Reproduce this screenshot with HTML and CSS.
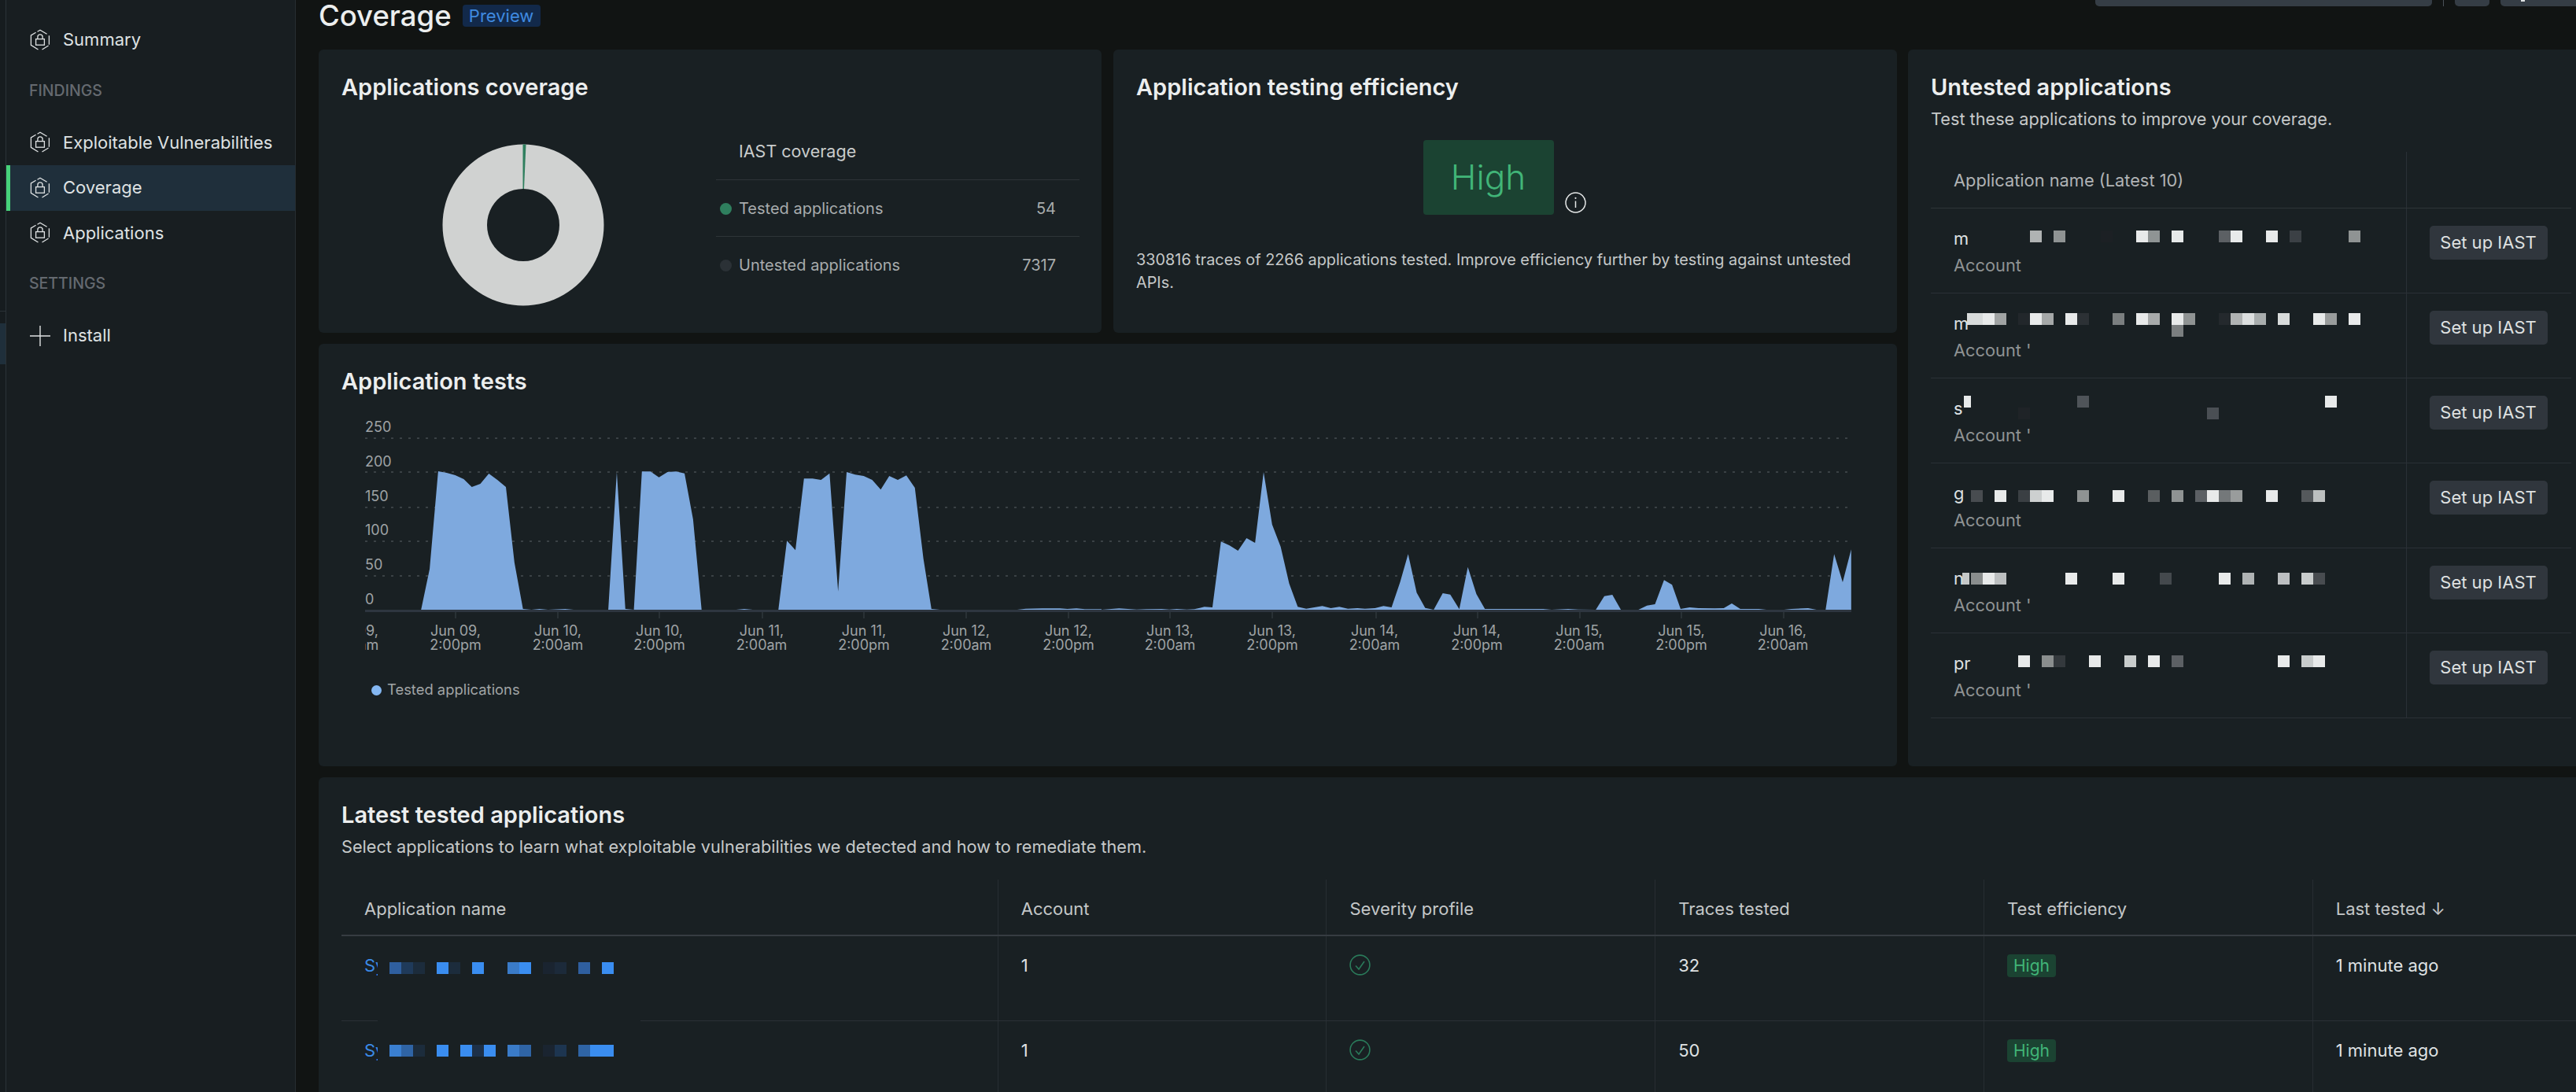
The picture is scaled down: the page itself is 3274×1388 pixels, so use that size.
FILE: index.html
```html
<!DOCTYPE html>
<html lang="en">
<head>
<meta charset="utf-8">
<title>Coverage</title>
<link rel="stylesheet" href="styles.css">
</head>
<body>
<svg class="defs" width="0" height="0" aria-hidden="true">
  <symbol id="hexlock" viewBox="0 0 28 28">
    <path d="M10.5 3.2 14 1.2l8.6 5M25.4 8.2v11.6M24.6 21 16.5 26M11.5 26 2.4 20.3V7.9L8.6 4.2" fill="none" stroke="currentColor" stroke-width="1.3"/>
    <rect x="8.6" y="12.6" width="10.8" height="7.6" fill="none" stroke="currentColor" stroke-width="1.3"/>
    <path d="M10.9 12.6V10a3.1 3.1 0 0 1 6.2 0v2.6" fill="none" stroke="currentColor" stroke-width="1.3"/>
  </symbol>
  <symbol id="okcheck" viewBox="0 0 27 27">
    <circle cx="13.5" cy="13.5" r="12.4" fill="none" stroke="currentColor" stroke-width="1.6"/>
    <path d="M8 14.5l4 4.5 7-10" fill="none" stroke="currentColor" stroke-width="1.6"/>
  </symbol>
</svg>

<div class="rail"><div class="rail-line"></div><div class="rail-active"></div></div>

<nav class="sidebar">
  <a class="nav-item"><svg class="nav-icon"><use href="#hexlock"/></svg>Summary</a>
  <div class="nav-heading">FINDINGS</div>
  <a class="nav-item"><svg class="nav-icon"><use href="#hexlock"/></svg>Exploitable Vulnerabilities</a>
  <a class="nav-item is-active"><svg class="nav-icon"><use href="#hexlock"/></svg>Coverage</a>
  <a class="nav-item"><svg class="nav-icon"><use href="#hexlock"/></svg>Applications</a>
  <div class="nav-heading">SETTINGS</div>
  <a class="nav-item"><svg class="nav-icon" viewBox="0 0 28 28"><path d="M14 1v26M1 14h26" fill="none" stroke="currentColor" stroke-width="1.4"/></svg>Install</a>
</nav>

<main class="main">
  <header class="page-head">
    <h1 class="page-title">Coverage</h1>
    <span class="preview">Preview</span>
    <div class="toolbar">
      <span class="tool tool-search"></span>
      <span class="tool-sep"></span>
      <span class="tool tool-small"></span>
      <span class="tool tool-last"><i class="tool-glyph"></i></span>
    </div>
  </header>

  <div class="grid">
    <section class="card card-coverage">
      <h2 class="card-title">Applications coverage</h2>
      <div class="coverage-body">
        <div class="donut-wrap">
          <svg class="donut" viewBox="0 0 206 206">
            <path d="M103 .5A102.500 102.500 0 1 1 102.990 .5ZM103 57A46 46 0 1 0 103.010 57Z" fill="#d0d2d1" fill-rule="evenodd"/>
            <path d="M102.500 .5L106.500 .6 104 57 102.500 57Z" fill="#2f7f5e"/>
          </svg>
        </div>
        <table class="cov-table">
          <tr><th colspan="2">IAST coverage</th></tr>
          <tr><td><span class="dot dot-green"></span>Tested applications</td><td class="num">54</td></tr>
          <tr><td><span class="dot dot-grey"></span>Untested applications</td><td class="num">7317</td></tr>
        </table>
      </div>
    </section>

    <section class="card card-eff">
      <h2 class="card-title">Application testing efficiency</h2>
      <div class="eff-row">
        <div class="eff-badge">High</div>
        <svg class="info" viewBox="0 0 27 27">
          <circle cx="13.500" cy="13.500" r="12.500" fill="none" stroke="currentColor" stroke-width="1.500"/>
          <path d="M13.500 11.500v8.500" stroke="currentColor" stroke-width="1.500"/>
          <circle cx="13.500" cy="7.800" r="1.100" fill="currentColor"/>
        </svg>
      </div>
      <p class="eff-text">330816 traces of 2266 applications tested. Improve efficiency further by testing against untested APIs.</p>
    </section>

    <section class="card card-untested">
      <h2 class="card-title">Untested applications</h2>
      <p class="card-sub">Test these applications to improve your coverage.</p>
      <table class="u-table">
        <colgroup><col class="u-col-name"><col class="u-col-action"></colgroup>
        <tr><th>Application name (Latest 10)</th><th></th></tr>
        <tr><td><div class="u-name">m</div><div class="u-acc">Account</div></td><td><button class="btn">Set up IAST</button></td></tr>
        <tr><td><div class="u-name">m</div><div class="u-acc">Account '</div></td><td><button class="btn">Set up IAST</button></td></tr>
        <tr><td><div class="u-name">s</div><div class="u-acc">Account '</div></td><td><button class="btn">Set up IAST</button></td></tr>
        <tr><td><div class="u-name">g</div><div class="u-acc">Account</div></td><td><button class="btn">Set up IAST</button></td></tr>
        <tr><td><div class="u-name">n</div><div class="u-acc">Account '</div></td><td><button class="btn">Set up IAST</button></td></tr>
        <tr><td><div class="u-name">pr</div><div class="u-acc">Account '</div></td><td><button class="btn">Set up IAST</button></td></tr>
      </table>
      <svg class="mask mask-untested" viewBox="2425 63 860 900" aria-hidden="true">
        <rect class="wipe" x="2578" y="910" width="50" height="2"/>
        <g transform="translate(2580 293)">
          <rect x="0" fill="#b0b3b3"/><rect x="30" fill="#8f9393"/><rect x="90" fill="#1c2024"/><rect x="135" fill="#e8eaea"/><rect x="150" fill="#8f9494"/><rect x="180" fill="#e6e9e9"/><rect x="240" fill="#5c6064"/><rect x="255" fill="#e8eaea"/><rect x="300" fill="#e8eaea"/><rect x="330" fill="#3b4045"/><rect x="405" fill="#8f9393"/>
        </g>
        <g transform="translate(2580 398)">
          <rect x="-80" fill="#d8dbdb"/><rect x="-75" fill="#d8dbdb"/><rect x="-60" fill="#e8eaea"/><rect x="-45" fill="#a0a3a3"/><rect x="-15" fill="#22272b"/><rect x="0" fill="#e8eaea"/><rect x="15" fill="#a5a8a8"/><rect x="45" fill="#e8eaea"/><rect x="60" fill="#2c3135"/><rect x="105" fill="#7b7f80"/><rect x="135" fill="#e8eaea"/><rect x="150" fill="#a8abab"/><rect x="180" fill="#e8eaea"/><rect x="195" fill="#8f9393"/><rect x="180" y="15" fill="#7b7f80"/><rect x="240" fill="#24292d"/><rect x="255" fill="#b0b3b3"/><rect x="270" fill="#dcdfdf"/><rect x="285" fill="#a8adad"/><rect x="315" fill="#d8dbdb"/><rect x="360" fill="#e8eaea"/><rect x="375" fill="#999c9c"/><rect x="405" fill="#e8eaea"/>
        </g>
        <g transform="translate(2580 503)">
          <rect class="narrow" x="-84" fill="#e8eaea"/><rect x="60" fill="#4f5459"/><rect x="375" fill="#e8eaea"/><rect x="-15" y="15" fill="#1f2327"/><rect x="225" y="15" fill="#4a4f54"/>
        </g>
        <g transform="translate(2580 623)">
          <rect x="-75" fill="#484c50"/><rect x="-45" fill="#e8eaea"/><rect x="-15" fill="#3a3f43"/><rect x="0" fill="#cdd0d0"/><rect x="15" fill="#e8eaea"/><rect x="60" fill="#8f9393"/><rect x="105" fill="#e8eaea"/><rect x="150" fill="#5a5e60"/><rect x="180" fill="#8f9393"/><rect x="210" fill="#5c6064"/><rect x="225" fill="#e8eaea"/><rect x="240" fill="#74787a"/><rect x="255" fill="#999c9c"/><rect x="300" fill="#e8eaea"/><rect x="345" fill="#55595c"/><rect x="360" fill="#bcbfbf"/>
        </g>
        <g transform="translate(2580 728)">
          <rect class="narrow" x="-86" fill="#c5c8c8"/><rect x="-75" fill="#8a8e8e"/><rect x="-60" fill="#e8eaea"/><rect x="-45" fill="#bcbfc0"/><rect x="45" fill="#e8eaea"/><rect x="105" fill="#e8eaea"/><rect x="165" fill="#44494d"/><rect x="240" fill="#e8eaea"/><rect x="270" fill="#afb3b4"/><rect x="315" fill="#bcbfc1"/><rect x="345" fill="#c8cccc"/><rect x="360" fill="#484c50"/>
        </g>
        <g transform="translate(2580 833)">
          <rect x="-15" fill="#e8eaea"/><rect x="15" fill="#8a8e8e"/><rect x="30" fill="#34393d"/><rect x="75" fill="#e8eaea"/><rect x="120" fill="#c8cccc"/><rect x="150" fill="#e8eaea"/><rect x="180" fill="#5c6064"/><rect x="315" fill="#e8eaea"/><rect x="345" fill="#c8cccc"/><rect x="360" fill="#e8eaea"/>
        </g>
      </svg>
    </section>

    <section class="card card-chart">
      <h2 class="card-title">Application tests</h2>
      <svg class="chart" viewBox="434 510 1940 350" role="img" aria-label="Tested applications over time">
        <defs><clipPath id="plot-clip"><rect x="464" y="770" width="1900" height="80"/></clipPath></defs>
        <g class="grid-lines">
          <line x1="464" x2="2353" y1="557" y2="557"/>
          <line x1="464" x2="2353" y1="600" y2="600"/>
          <line x1="464" x2="2353" y1="645" y2="645"/>
          <line x1="464" x2="2353" y1="688" y2="688"/>
          <line x1="464" x2="2353" y1="732" y2="732"/>
        </g>
        <g class="y-labels">
          <text x="464" y="549">250</text>
          <text x="464" y="593">200</text>
          <text x="464" y="637">150</text>
          <text x="464" y="680">100</text>
          <text x="464" y="724">50</text>
          <text x="464" y="768">0</text>
        </g>
        <polygon class="area" transform="translate(400 430) scale(.63776 .33333)" points="212,1035 229,880 246,507 263,513 280,522 297,537 313,567 330,555 347,516 364,540 381,567 398,855 415,1032 432,1035 448,1032 465,1035 499,1032 516,1035 585,1035 602,510 619,1032 636,1035 652,508 669,508 686,530 703,510 720,508 737,515 754,690 771,1035 840,1035 856,1032 873,1035 924,1035 941,772 958,808 975,535 992,535 1009,540 1026,515 1043,965 1060,510 1077,520 1094,525 1111,540 1128,577 1145,525 1162,540 1179,523 1196,570 1213,840 1229,1032 1246,1035 1400,1035 1417,1031 1450,1030 1485,1030 1500,1032 1518,1030 1535,1033 1568,1033 1568,1035"/>
        <polygon class="area" transform="translate(1400 430) scale(.63776 .33333)" points="0,1035 35,1030 70,1034 90,1033 120,1032 135,1034 150,1032 170,1034 185,1033 205,1024 221,1026 238,775 255,790 272,810 289,762 306,780 323,510 340,710 357,795 374,935 391,1024 408,1031 440,1021 457,1029 474,1024 491,1031 510,1029 525,1031 545,1029 562,1021 578,1026 595,930 611,823 628,970 645,1028 662,1035 680,972 695,977 713,1033 730,872 747,975 764,1032 880,1032 897,1035 930,1032 950,1034 985,1035 1002,983 1018,978 1035,1035 1070,1035 1087,1019 1103,1014 1121,922 1137,940 1154,1032 1172,1026 1190,1029 1222,1030 1240,1029 1256,1011 1273,1032 1310,1032 1325,1035 1360,1035 1375,1032 1408,1029 1425,1035 1443,1035 1460,823 1477,930 1494,805 1494,1035"/>
        <line class="baseline" x1="464" x2="2353" y1="776.500" y2="776.500"/>
        <g class="ticks">
          <line x1="579" x2="579" y1="778" y2="786"/><line x1="709" x2="709" y1="778" y2="786"/><line x1="838" x2="838" y1="778" y2="786"/><line x1="969" x2="969" y1="778" y2="786"/><line x1="1098" x2="1098" y1="778" y2="786"/><line x1="1228" x2="1228" y1="778" y2="786"/><line x1="1358" x2="1358" y1="778" y2="786"/><line x1="1487" x2="1487" y1="778" y2="786"/><line x1="1617" x2="1617" y1="778" y2="786"/><line x1="1749" x2="1749" y1="778" y2="786"/><line x1="1878" x2="1878" y1="778" y2="786"/><line x1="2008" x2="2008" y1="778" y2="786"/><line x1="2137" x2="2137" y1="778" y2="786"/><line x1="2267" x2="2267" y1="778" y2="786"/>
        </g>
        <g class="x-labels" clip-path="url(#plot-clip)">
          <text x="449" y="808">Jun 09,<tspan x="449" dy="18">2:00am</tspan></text>
          <text x="579" y="808">Jun 09,<tspan x="579" dy="18">2:00pm</tspan></text>
          <text x="709" y="808">Jun 10,<tspan x="709" dy="18">2:00am</tspan></text>
          <text x="838" y="808">Jun 10,<tspan x="838" dy="18">2:00pm</tspan></text>
          <text x="968" y="808">Jun 11,<tspan x="968" dy="18">2:00am</tspan></text>
          <text x="1098" y="808">Jun 11,<tspan x="1098" dy="18">2:00pm</tspan></text>
          <text x="1228" y="808">Jun 12,<tspan x="1228" dy="18">2:00am</tspan></text>
          <text x="1358" y="808">Jun 12,<tspan x="1358" dy="18">2:00pm</tspan></text>
          <text x="1487" y="808">Jun 13,<tspan x="1487" dy="18">2:00am</tspan></text>
          <text x="1617" y="808">Jun 13,<tspan x="1617" dy="18">2:00pm</tspan></text>
          <text x="1747" y="808">Jun 14,<tspan x="1747" dy="18">2:00am</tspan></text>
          <text x="1877" y="808">Jun 14,<tspan x="1877" dy="18">2:00pm</tspan></text>
          <text x="2007" y="808">Jun 15,<tspan x="2007" dy="18">2:00am</tspan></text>
          <text x="2137" y="808">Jun 15,<tspan x="2137" dy="18">2:00pm</tspan></text>
          <text x="2266" y="808">Jun 16,<tspan x="2266" dy="18">2:00am</tspan></text>
        </g>
      </svg>
      <div class="legend"><span class="dot dot-blue"></span>Tested applications</div>
    </section>

    <section class="card card-latest">
      <h2 class="card-title">Latest tested applications</h2>
      <p class="card-sub">Select applications to learn what exploitable vulnerabilities we detected and how to remediate them.</p>
      <table class="l-table">
        <colgroup><col class="l-col-name"><col class="l-col"><col class="l-col"><col class="l-col"><col class="l-col"><col class="l-col"></colgroup>
        <tr><th>Application name</th><th>Account</th><th>Severity profile</th><th>Traces tested</th><th>Test efficiency</th><th>Last tested ↓</th></tr>
        <tr><td><span class="app-link">Sy</span></td><td>1</td><td><svg class="ok"><use href="#okcheck"/></svg></td><td>32</td><td><span class="tag">High</span></td><td>1 minute ago</td></tr>
        <tr><td><span class="app-link">Sy</span></td><td>1</td><td><svg class="ok"><use href="#okcheck"/></svg></td><td>50</td><td><span class="tag">High</span></td><td>1 minute ago</td></tr>
      </table>
      <svg class="mask mask-latest" viewBox="405 988 500 400" aria-hidden="true">
        <rect class="wipe" x="480" y="1296" width="334" height="3"/>
        <g transform="translate(495 1223)">
          <rect x="0" fill="#2f5f9f"/><rect x="15" fill="#1f3a5a"/><rect x="30" fill="#1c2c3c"/><rect x="60" fill="#3a8df0"/><rect x="75" fill="#1c2c3c"/><rect x="105" fill="#3a8df0"/><rect x="150" fill="#3a7bc8"/><rect x="165" fill="#3a8df0"/><rect x="195" fill="#1a2430"/><rect x="210" fill="#1c2a3a"/><rect x="240" fill="#2f5f9f"/><rect x="270" fill="#3a8df0"/>
        </g>
        <g transform="translate(495 1328)">
          <rect x="0" fill="#3a7fd0"/><rect x="15" fill="#2f64a5"/><rect x="30" fill="#1c2c3c"/><rect x="60" fill="#3a8df0"/><rect x="90" fill="#3a8df0"/><rect x="105" fill="#1d3048"/><rect x="120" fill="#3a8df0"/><rect x="150" fill="#3a7bc8"/><rect x="165" fill="#2f64a5"/><rect x="195" fill="#1a2430"/><rect x="210" fill="#1d3550"/><rect x="240" fill="#2f64a5"/><rect x="255" fill="#3a8df0"/><rect x="270" fill="#3a8df0"/>
        </g>
      </svg>
    </section>
  </div>
</main>
</body>
</html>
```

FILE: styles.css
```css
* { box-sizing: border-box; }

html, body {
  margin: 0;
  height: 1388px;
  overflow: hidden;
}

body {
  display: flex;
  background: #111413;
  color: #e6e8e8;
  font-family: Inter, "Noto Sans", sans-serif;
  font-size: 22px;
  line-height: 29px;
}

.defs { position: absolute; }

/* Left rail */
.rail {
  flex: 0 0 8px;
  padding-top: 395px;
  background: #161c1f;
  border-right: 1px solid #2a3237;
}
.rail-line {
  height: 16px;
  border-top: 1px solid #2a3237;
}
.rail-active {
  height: 52px;
  background: #1f2f3b;
}

/* Sidebar */
.sidebar {
  flex: 0 0 368px;
  padding-top: 22px;
  background: #181e21;
  border-right: 1px solid #262c30;
}
.nav-item {
  display: flex;
  align-items: center;
  gap: 15px;
  height: 57.5px;
  padding-left: 29px;
  color: #dfe2e3;
}
.nav-icon {
  flex: none;
  width: 28px;
  height: 28px;
  color: #dfe2e3;
}
.nav-item.is-active {
  padding-left: 24px;
  background: #1f2f3b;
  border-left: 5px solid #46d27a;
}
.nav-heading {
  height: 73px;
  padding: 21px 0 0 29px;
  color: #656a70;
  font-size: 19.500px;
  font-weight: 500;
}

/* Main */
.main {
  flex: 1;
  min-width: 0;
  padding-left: 29px;
}
.page-head {
  display: flex;
  align-items: flex-start;
  height: 63px;
}
.page-title {
  margin: 0;
  font-size: 36.500px;
  font-weight: 500;
  line-height: 40px;
  color: #eceeee;
}
.preview {
  margin: 6px 0 0 14px;
  width: 99px;
  height: 28px;
  text-align: center;
  line-height: 28px;
  font-size: 22px;
  color: #3f8ae0;
  background: #12294a;
  border-radius: 4px;
}
.toolbar {
  display: flex;
  align-items: flex-start;
  margin-left: auto;
}
.tool {
  display: block;
  height: 8px;
  background: #353d45;
  border-radius: 0 0 5px 5px;
}
.tool-search { width: 428px; }
.tool-sep {
  width: 1px;
  height: 8px;
  margin: 0 14px;
  background: #4a5158;
}
.tool-small { width: 44px; margin-right: 14px; }
.tool-last {
  width: 96px;
  padding-left: 26px;
  border-radius: 0 0 0 5px;
}
.tool-glyph {
  display: block;
  width: 5px;
  height: 2px;
  background: #dfe2e3;
}

.grid {
  display: grid;
  grid-template-columns: 995px 996px 870px;
  grid-template-rows: 360px 537px auto;
  column-gap: 15px;
  row-gap: 14px;
}

.card {
  position: relative;
  padding: 29px;
  background: #192023;
  border-radius: 6px;
}
.card-title {
  margin: 0;
  font-size: 29px;
  font-weight: 600;
  line-height: 37px;
  color: #eceeee;
}
.card-sub {
  margin: 8px 0 0;
  color: #c6c9c9;
  font-size: 21.700px;
}

/* Coverage */
.coverage-body {
  display: flex;
  align-items: flex-start;
}
.donut-wrap {
  flex: 0 0 462px;
  display: flex;
  justify-content: center;
  padding-top: 54px;
}
.donut {
  display: block;
  width: 206px;
  height: 206px;
  margin-left: -1px;
}
.cov-table {
  flex: 0 0 462px;
  margin: 27px 0 0 14px;
  border-collapse: collapse;
  font-size: 20px;
  color: #a8acad;
}
.cov-table th {
  height: 72px;
  padding: 2px 0 0 29px;
  text-align: left;
  font-weight: 400;
  font-size: 21.500px;
  color: #c9cccc;
}
.cov-table td {
  height: 72px;
  padding: 2px 0 0 5px;
  border-top: 1px solid #2e3438;
}
.cov-table .num {
  width: 100px;
  padding: 2px 30px 0 0;
  text-align: right;
}
.dot {
  display: inline-block;
  width: 15px;
  height: 15px;
  margin-right: 9px;
  border-radius: 50%;
  vertical-align: -1px;
}
.dot-green { background: #2f7f5e; }
.dot-grey { background: #2b3136; }
.dot-blue {
  width: 13px;
  height: 13px;
  margin-right: 7px;
  background: #84b7f2;
}

/* Efficiency */
.eff-row {
  display: flex;
  justify-content: center;
  align-items: flex-end;
  gap: 14px;
  margin: 49px 2px 0 0;
}
.eff-badge {
  width: 166px;
  height: 95px;
  text-align: center;
  line-height: 95px;
  font-size: 44px;
  font-weight: 300;
  color: #41b578;
  background: #1b4332;
  border-radius: 4px;
}
.info {
  width: 27px;
  height: 27px;
  margin-bottom: 2px;
  color: #e6e8e8;
}
.eff-text {
  margin: 43px 0 0;
  color: #c6c9c9;
  font-size: 19.850px;
}

/* Untested */
.card-untested {
  grid-column: 3;
  grid-row: 1 / span 2;
  margin-left: -1px;
}
.u-table {
  width: 814px;
  margin-top: 27px;
  border-collapse: collapse;
  table-layout: fixed;
}
.u-col-name { width: 604px; }
.u-table th {
  height: 71px;
  padding: 2px 0 0 29px;
  text-align: left;
  font-weight: 400;
  font-size: 21.800px;
  color: #b0b3b5;
  border-bottom: 1px solid #2e3438;
}
.u-table th + th,
.u-table td + td {
  border-left: 1px solid #2a3036;
}
.u-table td {
  height: 108px;
  padding: 24px 0 0 29px;
  vertical-align: top;
  border-bottom: 1px solid #2a3036;
}
.u-table td + td { padding-top: 22px; }
.u-name { color: #dfe2e3; font-size: 21.800px; }
.u-acc { margin-top: 5px; color: #8f9394; font-size: 21.800px; }
.btn {
  display: block;
  width: 150px;
  height: 43px;
  padding: 0;
  font: inherit;
  color: #dfe1e1;
  background: #30363d;
  border: 0;
  border-radius: 5px;
}

.mask {
  position: absolute;
  left: 0;
  top: 0;
  pointer-events: none;
}
.mask-untested { width: 860px; height: 900px; }
.mask-latest { width: 500px; height: 400px; }
.mask g rect { width: 15px; height: 15px; }
.mask g rect.narrow { width: 9px; }
.wipe { fill: #192023; }

/* Chart */
.card-chart { grid-column: 1 / span 2; }
.chart {
  display: block;
  width: 1940px;
  height: 350px;
  margin-top: 7px;
  font-family: Inter, "Noto Sans", sans-serif;
  font-size: 18px;
}
.grid-lines line {
  stroke: #3a4145;
  stroke-width: 2;
  stroke-dasharray: 3 8;
}
.y-labels text { fill: #9fa3a5; }
.x-labels text { fill: #9fa3a5; text-anchor: middle; }
.area { fill: #7ea9de; }
.baseline { stroke: #2e3640; stroke-width: 3; }
.ticks line { stroke: #3a4248; stroke-width: 1; }
.legend {
  padding: 1px 0 0 38px;
  height: 30px;
  line-height: 30px;
  font-size: 18.400px;
  color: #a0a4a5;
}

/* Latest */
.card-latest {
  grid-column: 1 / span 3;
  width: 2990px;
}
.l-table {
  margin-top: 27px;
  width: 2923px;
  border-collapse: collapse;
  table-layout: fixed;
}
.l-col-name { width: 834px; }
.l-col { width: 417.670px; }
.l-table th {
  height: 71px;
  padding: 4px 0 0 29px;
  text-align: left;
  font-weight: 400;
  color: #c4c7c8;
  border-bottom: 2px solid #363c42;
}
.l-table td {
  height: 108px;
  padding: 23px 0 0 29px;
  vertical-align: top;
  color: #dfe2e3;
  border-bottom: 1px solid #2a3036;
}
.l-table th + th,
.l-table td + td {
  border-left: 1px solid #272d32;
}
.app-link {
  display: block;
  width: 17px;
  overflow: hidden;
  color: #3b8ae6;
}
.ok {
  display: block;
  width: 27px;
  height: 27px;
  color: #2a7a5a;
}
.tag {
  display: inline-block;
  width: 62px;
  height: 29px;
  text-align: center;
  font-size: 21px;
  color: #41b578;
  background: #1b4332;
  border-radius: 4px;
}
```
